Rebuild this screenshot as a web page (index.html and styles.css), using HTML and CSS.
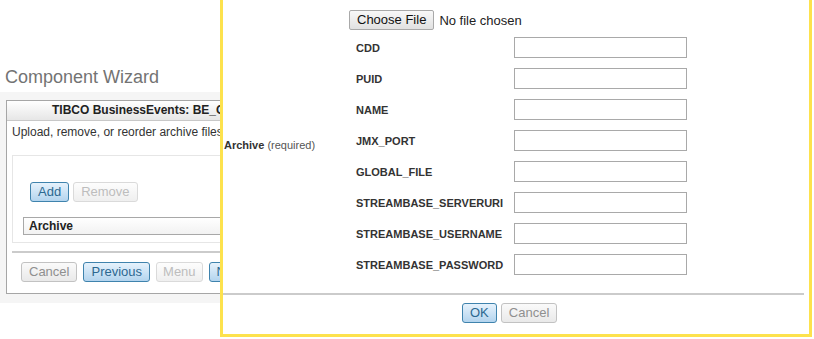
FILE: index.html
```html
<!DOCTYPE html>
<html lang="en">

<head>
    <meta charset="UTF-8">
    <meta name="viewport" content="width=device-width, initial-scale=1.0">
    <title>Component Wizard</title>
    <link rel="stylesheet" href="styles.css">
</head>

<body>
    <div class="wizard">
        <h2 class="wizard-title">Component Wizard</h2>
        <div class="wizard-panel">
            <div class="dialog">
                <div class="dialog-head">TIBCO BusinessEvents: BE_Component</div>
                <div class="dialog-body">
                    <p class="hint">Upload, remove, or reorder archive files for this component.</p>
                    <div class="archive-box">
                        <div class="btn-row">
                            <button class="btn btn-primary">Add</button>
                            <button class="btn" disabled>Remove</button>
                        </div>
                        <div class="grid-head">Archive</div>
                    </div>
                    <div class="separator"></div>
                </div>
                <div class="dialog-foot">
                    <button class="btn btn-muted">Cancel</button>
                    <button class="btn btn-primary">Previous</button>
                    <button class="btn btn-narrow" disabled>Menu</button>
                    <button class="btn btn-primary">Next</button>
                </div>
            </div>
        </div>
    </div>

    <!-- archive upload popup -->
    <div class="modal">
        <div class="modal-form">
            <div class="field-caption"><b>Archive</b> (required)</div>
            <div class="field-list">
                <div class="file-row">
                    <span class="file-btn">Choose File</span>
                    <span class="file-name">No file chosen</span>
                </div>
                <div class="prop-row"><label class="prop-label">CDD</label><input class="prop-input" type="text"></div>
                <div class="prop-row"><label class="prop-label">PUID</label><input class="prop-input" type="text"></div>
                <div class="prop-row"><label class="prop-label">NAME</label><input class="prop-input" type="text"></div>
                <div class="prop-row"><label class="prop-label">JMX_PORT</label><input class="prop-input" type="text"></div>
                <div class="prop-row"><label class="prop-label">GLOBAL_FILE</label><input class="prop-input" type="text"></div>
                <div class="prop-row"><label class="prop-label">STREAMBASE_SERVERURI</label><input class="prop-input" type="text"></div>
                <div class="prop-row"><label class="prop-label">STREAMBASE_USERNAME</label><input class="prop-input" type="text"></div>
                <div class="prop-row"><label class="prop-label">STREAMBASE_PASSWORD</label><input class="prop-input" type="text"></div>
            </div>
        </div>
        <div class="modal-separator"></div>
        <div class="modal-foot">
            <button class="btn btn-primary">OK</button>
            <button class="btn btn-muted">Cancel</button>
        </div>
    </div>
</body>

</html>
```

FILE: styles.css
```css
body {
    font-family: 'Liberation Sans', Arial, sans-serif;
    margin: 0;
    padding: 0;
    color: #333;
    background: #fff;
    overflow: hidden;
}

/* the page behind the popup, only its left part shows */
.wizard {
    width: 220px;
    overflow: hidden;
    padding-top: 67px;
}

.wizard-title {
    margin: 0 0 4px 5px;
    font-size: 18px;
    line-height: 21px;
    font-weight: normal;
    color: #737373;
    white-space: nowrap;
}

.wizard-panel {
    background-color: #f5f5f5;
    padding: 8px 0 9px 6px;
}

.dialog {
    width: 420px;
    background-color: #fff;
    border: 1px solid #a6a6a6;
}

.dialog-head {
    height: 19px;
    line-height: 19px;
    padding-left: 45px;
    font-size: 12px;
    font-weight: bold;
    color: #222;
    background: linear-gradient(#ffffff, #e6e6e6);
    border-bottom: 1px solid #c8c8c8;
    white-space: nowrap;
}

.dialog-body {
    padding: 0 5px;
}

.hint {
    margin: 0;
    padding-top: 4px;
    font-size: 12px;
    line-height: 14px;
    white-space: nowrap;
}

.archive-box {
    margin-top: 16px;
    border: 1px solid #e6e6e6;
    padding: 26px 0 7px 0;
}

.btn-row {
    display: flex;
    gap: 4px;
    padding-left: 17px;
}

.grid-head {
    margin: 15px 0 0 10px;
    height: 16px;
    line-height: 16px;
    padding-left: 5px;
    border: 1px solid #a8a8a8;
    font-size: 12px;
    font-weight: bold;
    color: #222;
    background: linear-gradient(#ffffff, #f2f2f2);
}

.separator {
    margin-top: 8px;
    height: 2px;
    background-color: #cbcbcb;
}

.dialog-foot {
    display: flex;
    gap: 6px;
    padding: 9px 0 11px 14px;
}

.btn {
    height: 20px;
    padding: 0 7px;
    font-family: 'Liberation Sans', Arial, sans-serif;
    font-size: 13px;
    line-height: 18px;
    border-radius: 3px;
    border: 1px solid #dadada;
    color: #bdbdbd;
    background: linear-gradient(#fdfdfd, #efefef);
}

.btn-narrow {
    padding: 0 6px;
}

.btn-muted {
    border-color: #c2c2c2;
    color: #8f8f8f;
    background: linear-gradient(#fafafa, #e9e9e9);
}

.btn-primary {
    border-color: #3f83ad;
    color: #2c6891;
    background: linear-gradient(#e6f2fc, #b3d4ee);
}

.modal {
    position: absolute;
    left: 220px;
    top: -20px;
    width: 592px;
    box-sizing: border-box;
    background-color: #fff;
    border: 3px solid #fde24d;
}

.modal-form {
    display: grid;
    grid-template-columns: 126px 1fr;
    align-items: center;
    padding-top: 27px;
}

.field-caption {
    padding-left: 1px;
    padding-top: 5px;
    font-size: 11px;
    color: #555;
}

.field-caption b {
    color: #333;
}

.field-list {
    display: flex;
    flex-direction: column;
    gap: 10px;
}

.file-row {
    display: flex;
    align-items: center;
    height: 20px;
    margin-bottom: -3px;
}

.file-btn {
    box-sizing: border-box;
    height: 20px;
    line-height: 18px;
    padding: 0 7px;
    font-size: 13px;
    color: #111;
    border: 1px solid #a9a9a9;
    border-radius: 2px;
    background: linear-gradient(#f8f8f8, #e1e1e1);
}

.file-name {
    margin-left: 5px;
    font-size: 13px;
    color: #222;
}

.prop-row {
    display: flex;
    align-items: center;
    height: 21px;
}

.prop-label {
    width: 158px;
    padding-left: 7px;
    font-size: 11px;
    font-weight: bold;
    color: #333;
}

.prop-input {
    box-sizing: border-box;
    width: 173px;
    height: 21px;
    margin: 0;
    border: 1px solid #a9a9a9;
    border-radius: 0;
    padding: 0 3px;
}

.modal-separator {
    margin: 18px 5px 0 0;
    height: 2px;
    background-color: #cbcbcb;
}

.modal-foot {
    display: flex;
    gap: 4px;
    padding: 8px 0 11px 239px;
}
```
